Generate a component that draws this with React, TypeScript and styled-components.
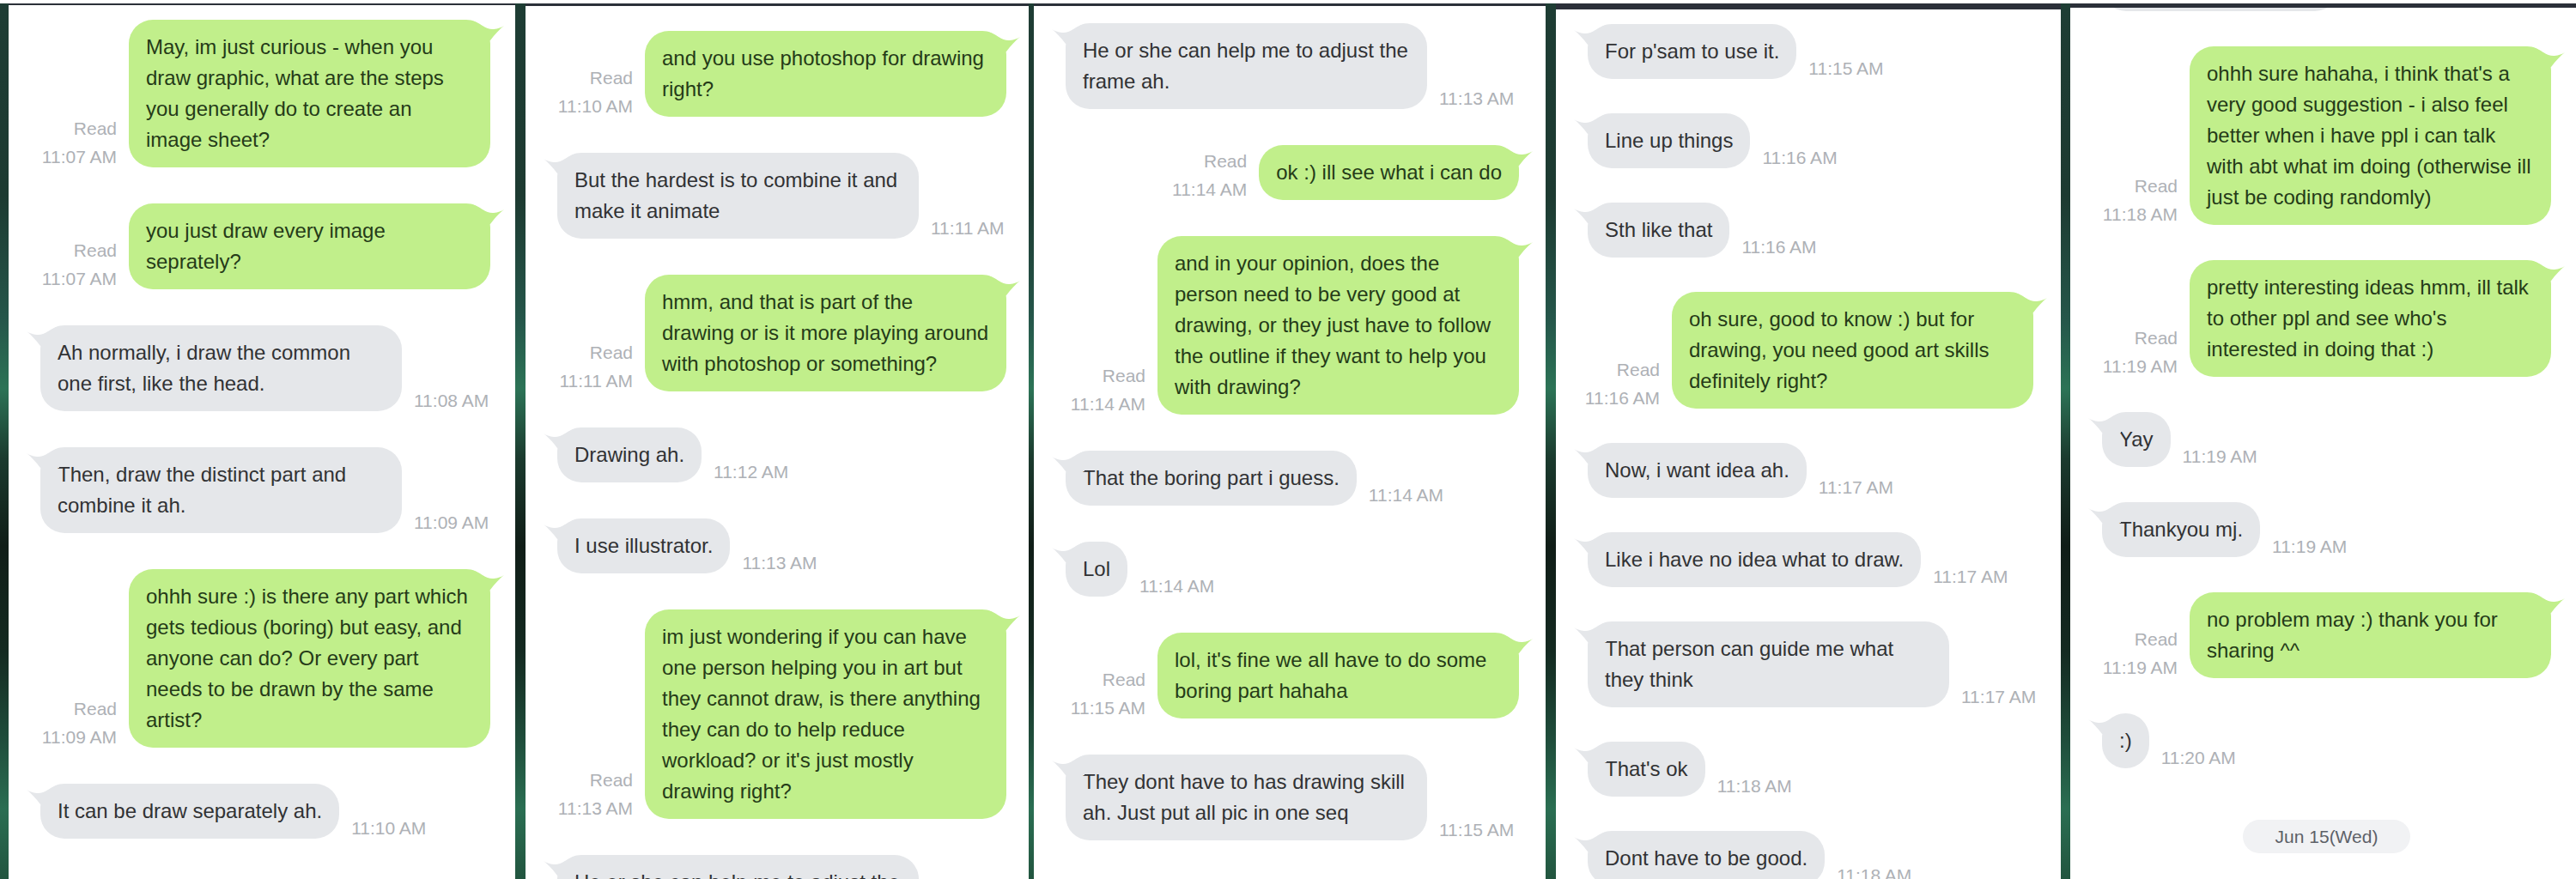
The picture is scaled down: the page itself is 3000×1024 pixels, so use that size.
import { FC } from 'react';
import styled, { createGlobalStyle } from 'styled-components';

const GlobalStyle = createGlobalStyle`
  html, body {
    margin: 0;
    padding: 0;
    background: #fff;
  }

  body {
    font-family: "Liberation Sans", Arial, Helvetica, sans-serif;
  }
`;

// the dark green wallpaper that shows between the stitched screenshots
const Screen = styled.div`
  display: flex;
  align-items: stretch;
  width: 3000px;
  height: 1020px;
  margin-top: 4px;
  padding-left: 10px;
  box-sizing: border-box;
  overflow: hidden;
  background: linear-gradient(
    180deg,
    #1e3d34 0%,
    #1d3a31 22%,
    #25564a 36%,
    #2c7356 44%,
    #1b3a2e 52%,
    #101d17 62%,
    #142a21 74%,
    #1f4d3b 84%,
    #2a6e52 92%,
    #22553f 100%
  );
`;

const Panel = styled.section<{ $w: number; $ml: number; $bar: number }>`
  flex: none;
  width: ${p => p.$w}px;
  margin-left: ${p => p.$ml}px;
  background: #fff;
  border-top: ${p => p.$bar}px solid #2b3039;
  overflow: hidden;
`;

const Thread = styled.div<{ $top: number; $gap: number; $pr: number }>`
  display: flex;
  flex-direction: column;
  gap: ${p => p.$gap}px;
  margin-top: ${p => p.$top}px;
  padding: 0 ${p => p.$pr}px 0 37px;
`;

const Row = styled.div<{ $mine: boolean }>`
  display: flex;
  flex-direction: ${p => (p.$mine ? 'row-reverse' : 'row')};
  align-items: flex-end;
  gap: 14px;
`;

const Bubble = styled.div<{ $mine: boolean; $wide: boolean }>`
  position: relative;
  flex: none;
  box-sizing: border-box;
  width: ${p => (p.$wide ? '421px' : 'auto')};
  padding: 14px 20px;
  border-radius: 28px;
  background: ${p => (p.$mine ? '#c1ef8b' : '#e5e7ea')};
  color: ${p => (p.$mine ? '#253b18' : '#313234')};
  font-size: 24px;
  line-height: 36px;
  white-space: nowrap;

  span {
    display: block;
  }
`;

const Tail = styled.svg<{ $mine: boolean }>`
  position: absolute;
  top: 0;
  width: 40px;
  height: 30px;
  overflow: visible;
  ${p => (p.$mine ? 'right: -18px;' : 'left: -18px; transform: scaleX(-1);')}
`;

const Meta = styled.div`
  display: flex;
  flex-direction: column;
  align-items: flex-end;
  gap: 9px;
  font-size: 21px;
  line-height: 24px;
  color: #aeb1b6;
  white-space: nowrap;
`;

const DateChip = styled.div`
  align-self: center;
  margin-top: 19px;
  padding: 0 38px;
  height: 39px;
  line-height: 39px;
  border-radius: 20px;
  background: #f1f2f4;
  color: #5d6168;
  font-size: 21px;
`;

type Msg = {
  mine?: boolean;
  lines: string[];
  time: string;
};

type PanelDef = {
  w: number;
  ml: number;
  bar: number;
  top: number;
  gap: number;
  pr: number;
  msgs: Msg[];
  date?: string;
};

const TAIL_PATH = 'M-22 0.7 C-12 4 -4 12 4 11 C9 10.5 13 9 16 7 C11 11 5 17 0 24 L-22 24 Z';

const Message: FC<{ msg: Msg }> = ({ msg }) => {
  const mine = !!msg.mine;
  return (
    <Row $mine={mine}>
      <Bubble $mine={mine} $wide={msg.lines.length > 1}>
        <Tail $mine={mine} viewBox="-22 0 40 30" aria-hidden>
          <path d={TAIL_PATH} fill={mine ? '#c1ef8b' : '#e5e7ea'} />
        </Tail>
        {msg.lines.map((line, i) => (
          <span key={i}>{line}</span>
        ))}
      </Bubble>
      <Meta>
        {mine && <div>Read</div>}
        <div>{msg.time}</div>
      </Meta>
    </Row>
  );
};

const panels: PanelDef[] = [
  {
    w: 590, ml: 0, bar: 2, top: 17, gap: 42, pr: 29,
    msgs: [
      { mine: true, lines: ['May, im just curious - when you', 'draw graphic, what are the steps', 'you generally do to create an', 'image sheet?'], time: '11:07 AM' },
      { mine: true, lines: ['you just draw every image', 'seprately?'], time: '11:07 AM' },
      { lines: ['Ah normally, i draw the common', 'one first, like the head.'], time: '11:08 AM' },
      { lines: ['Then, draw the distinct part and', 'combine it ah.'], time: '11:09 AM' },
      { mine: true, lines: ['ohhh sure :) is there any part which', 'gets tedious (boring) but easy, and', 'anyone can do? Or every part', 'needs to be drawn by the same', 'artist?'], time: '11:09 AM' },
      { lines: ['It can be draw separately ah.'], time: '11:10 AM' },
    ],
  },
  {
    w: 586, ml: 12, bar: 3, top: 29, gap: 42, pr: 26,
    msgs: [
      { mine: true, lines: ['and you use photoshop for drawing', 'right?'], time: '11:10 AM' },
      { lines: ['But the hardest is to combine it and', 'make it animate'], time: '11:11 AM' },
      { mine: true, lines: ['hmm, and that is part of the', 'drawing or is it more playing around', 'with photoshop or something?'], time: '11:11 AM' },
      { lines: ['Drawing ah.'], time: '11:12 AM' },
      { lines: ['I use illustrator.'], time: '11:13 AM' },
      { mine: true, lines: ['im just wondering if you can have', 'one person helping you in art but', 'they cannot draw, is there anything', 'they can do to help reduce', "workload? or it's just mostly", 'drawing right?'], time: '11:13 AM' },
      { lines: ['He or she can help me to adjust the', 'frame ah.'], time: '11:13 AM' },
    ],
  },
  {
    w: 596, ml: 6, bar: 3, top: 20, gap: 42, pr: 31,
    msgs: [
      { lines: ['He or she can help me to adjust the', 'frame ah.'], time: '11:13 AM' },
      { mine: true, lines: ['ok :) ill see what i can do'], time: '11:14 AM' },
      { mine: true, lines: ['and in your opinion, does the', 'person need to be very good at', 'drawing, or they just have to follow', 'the outline if they want to help you', 'with drawing?'], time: '11:14 AM' },
      { lines: ['That the boring part i guess.'], time: '11:14 AM' },
      { lines: ['Lol'], time: '11:14 AM' },
      { mine: true, lines: ["lol, it's fine we all have to do some", 'boring part hahaha'], time: '11:15 AM' },
      { lines: ['They dont have to has drawing skill', 'ah. Just put all pic in one seq'], time: '11:15 AM' },
    ],
  },
  {
    w: 588, ml: 12, bar: 7, top: 17, gap: 40, pr: 32,
    msgs: [
      { lines: ["For p'sam to use it."], time: '11:15 AM' },
      { lines: ['Line up things'], time: '11:16 AM' },
      { lines: ['Sth like that'], time: '11:16 AM' },
      { mine: true, lines: ['oh sure, good to know :) but for', 'drawing, you need good art skills', 'definitely right?'], time: '11:16 AM' },
      { lines: ['Now, i want idea ah.'], time: '11:17 AM' },
      { lines: ['Like i have no idea what to draw.'], time: '11:17 AM' },
      { lines: ['That person can guide me what', 'they think'], time: '11:17 AM' },
      { lines: ["That's ok"], time: '11:18 AM' },
      { lines: ['Dont have to be good.'], time: '11:18 AM' },
    ],
  },
  {
    w: 589, ml: 11, bar: 5, top: -60, gap: 41, pr: 29,
    msgs: [
      { lines: ['Dont have to be good.'], time: '11:18 AM' },
      { mine: true, lines: ["ohhh sure hahaha, i think that's a", 'very good suggestion - i also feel', 'better when i have ppl i can talk', 'with abt what im doing (otherwise ill', 'just be coding randomly)'], time: '11:18 AM' },
      { mine: true, lines: ['pretty interesting ideas hmm, ill talk', "to other ppl and see who's", 'interested in doing that :)'], time: '11:19 AM' },
      { lines: ['Yay'], time: '11:19 AM' },
      { lines: ['Thankyou mj.'], time: '11:19 AM' },
      { mine: true, lines: ['no problem may :) thank you for', 'sharing ^^'], time: '11:19 AM' },
      { lines: [':)'], time: '11:20 AM' },
    ],
    date: 'Jun 15(Wed)',
  },
];

const App: FC = () => (
  <>
    <GlobalStyle />
    <Screen>
      {panels.map((p, i) => (
        <Panel key={i} $w={p.w} $ml={p.ml} $bar={p.bar}>
          <Thread $top={p.top} $gap={p.gap} $pr={p.pr}>
            {p.msgs.map((m, j) => (
              <Message key={j} msg={m} />
            ))}
            {p.date && <DateChip>{p.date}</DateChip>}
          </Thread>
        </Panel>
      ))}
    </Screen>
  </>
);

export default App;
